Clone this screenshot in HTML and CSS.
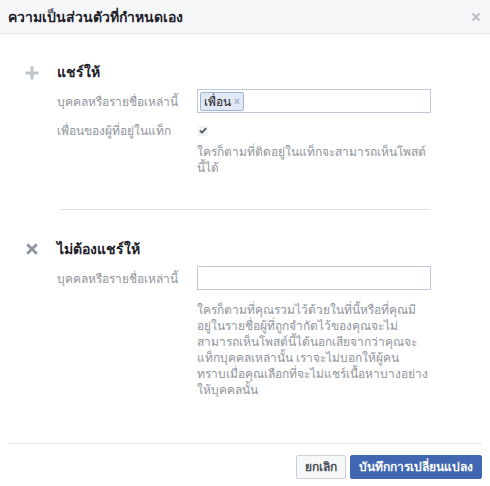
FILE: index.html
```html
<!DOCTYPE html>
<html lang="th">
<head>
<meta charset="utf-8">
<link rel="stylesheet" href="styles.css">
</head>
<body>
<div class="dialog">
  <div class="header">
    <h2 class="title">ความเป็นส่วนตัวที่กำหนดเอง</h2>
    <svg class="close" width="10" height="10" viewBox="0 0 10 10"><path d="M1.5 1.5 L8.5 8.5 M8.5 1.5 L1.5 8.5" stroke="#bec2c9" stroke-width="2.2"/></svg>
  </div>
  <div class="body">
    <div class="section share">
      <div class="icon">
        <svg width="14" height="14" viewBox="0 0 14 14"><path d="M7 0.5 V13.5 M0.5 7 H13.5" stroke="#bec2c9" stroke-width="3"/></svg>
      </div>
      <div class="content">
        <div class="heading">แชร์ให้</div>
        <div class="row">
          <div class="label">บุคคลหรือรายชื่อเหล่านี้</div>
          <div class="input"><span class="token">เพื่อน<span class="tx">×</span></span></div>
        </div>
        <div class="row check-row">
          <div class="label">เพื่อนของผู้ที่อยู่ในแท็ก</div>
          <div class="check">
            <span class="box"><svg width="8" height="7" viewBox="0 0 8 7"><path d="M0.8 3.6 L3 5.6 L7.2 1.2" stroke="#4b4f56" stroke-width="1.7" fill="none"/></svg></span>
          </div>
        </div>
        <div class="row">
          <div></div>
          <div class="help">ใครก็ตามที่ติดอยู่ในแท็กจะสามารถเห็นโพสต์<br>นี้ได้</div>
        </div>
      </div>
    </div>
    <div class="divider"></div>
    <div class="section noshare">
      <div class="icon">
        <svg width="12" height="12" viewBox="0 0 12 12"><path d="M1.2 1.2 L10.8 10.8 M10.8 1.2 L1.2 10.8" stroke="#90949c" stroke-width="2.8"/></svg>
      </div>
      <div class="content">
        <div class="heading">ไม่ต้องแชร์ให้</div>
        <div class="row">
          <div class="label">บุคคลหรือรายชื่อเหล่านี้</div>
          <div class="input"></div>
        </div>
        <div class="row">
          <div></div>
          <div class="help">ใครก็ตามที่คุณรวมไว้ด้วยในที่นี้หรือที่คุณมี<br>อยู่ในรายชื่อผู้ที่ถูกจำกัดไว้ของคุณจะไม่<br>สามารถเห็นโพสต์นี้ได้นอกเสียจากว่าคุณจะ<br>แท็กบุคคลเหล่านั้น เราจะไม่บอกให้ผู้คน<br>ทราบเมื่อคุณเลือกที่จะไม่แชร์เนื้อหาบางอย่าง<br>ให้บุคคลนั้น</div>
        </div>
      </div>
    </div>
  </div>
  <div class="footer">
    <button class="btn cancel">ยกเลิก</button>
    <button class="btn primary">บันทึกการเปลี่ยนแปลง</button>
  </div>
</div>
</body>
</html>
```
FILE: styles.css
```css
* { box-sizing: border-box; }
html, body { margin: 0; padding: 0; background: #fff; }
body {
  font-family: Tahoma, "Liberation Sans", "DejaVu Sans", sans-serif;
  font-size: 12px;
  color: #1d2129;
  width: 490px;
  height: 486px;
  overflow: hidden;
}
.dialog { width: 490px; }
.header {
  height: 34px;
  background: #f6f7f9;
  border-bottom: 1px solid #e5e5e5;
  display: flex;
  align-items: center;
  justify-content: space-between;
  padding: 0 9px 0 8px;
}
.title { margin: 0; font-size: 14px; font-weight: bold; color: #1d2129; }
.close { display: block; }
.body { padding: 28px 0 0 0; }
.section { display: flex; padding-left: 25px; }
.icon { width: 32px; padding-top: 4px; }
.icon svg { display: block; }
.noshare .icon { padding-left: 1px; }
.content { flex: none; }
.heading { font-size: 14px; font-weight: bold; height: 20px; line-height: 20px; margin-bottom: 7px; }
.row { display: grid; grid-template-columns: 140px 234px; align-items: center; }
.label { color: #90949c; white-space: nowrap; }
.input {
  height: 24px;
  border: 1px solid #bdc7d8;
  background: #fff;
  padding: 2px;
  display: flex;
  align-items: center;
}
.token {
  background: #e2e8f4;
  border: 1px solid #9cb4d8;
  border-radius: 2px;
  height: 19px;
  padding: 0 3px;
  display: inline-flex;
  align-items: center;
  color: #1d2129;
}
.tx { color: #a0abc2; font-size: 10px; margin-left: 3px; font-weight: bold; }
.check-row { margin-top: 8px; }
.check { height: 16px; display: flex; align-items: center; }
.box {
  width: 10px;
  height: 10px;
  background: #f2f3f5;
  border-radius: 1px;
  display: flex;
  align-items: center;
  justify-content: center;
  margin-left: 1px;
}
.box svg { display: block; }
.help { color: #90949c; line-height: 16px; margin-top: 12px; white-space: nowrap; }
.share .help { margin-top: 4px; }
.divider { height: 1px; background: #dddfe2; margin: 33px 60px 29px 60px; }
.footer {
  margin: 45px 8px 0 8px;
  border-top: 1px solid #e5e5e5;
  padding-top: 11px;
  display: flex;
  justify-content: flex-end;
  gap: 4px;
}
.btn {
  height: 24px;
  font-family: inherit;
  font-size: 12px;
  font-weight: bold;
  padding: 0 8px;
  border-radius: 2px;
  line-height: 22px;
}
.cancel { background: #f6f7f9; border: 1px solid #ced0d4; color: #4b4f56; }
.primary { background: #4267b2; border: 1px solid #4267b2; color: #fff; }
```
